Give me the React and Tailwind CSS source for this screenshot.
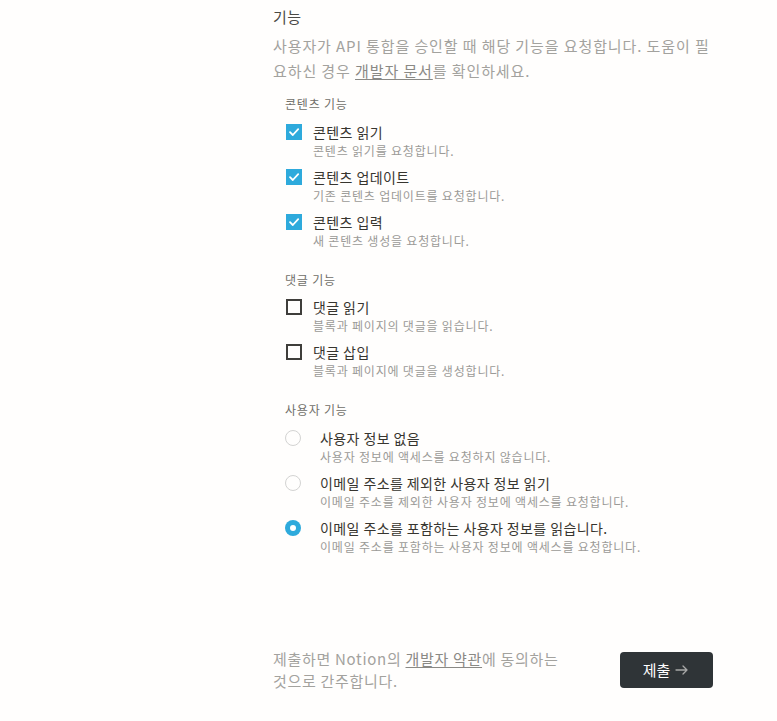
import React from 'react';

const font = { fontFamily: '"Noto Sans CJK KR", "Noto Sans", sans-serif' };

const contentItems = [
  { title: '콘텐츠 읽기', desc: '콘텐츠 읽기를 요청합니다.', checked: true },
  { title: '콘텐츠 업데이트', desc: '기존 콘텐츠 업데이트를 요청합니다.', checked: true },
  { title: '콘텐츠 입력', desc: '새 콘텐츠 생성을 요청합니다.', checked: true },
];

const commentItems = [
  { title: '댓글 읽기', desc: '블록과 페이지의 댓글을 읽습니다.', checked: false },
  { title: '댓글 삽입', desc: '블록과 페이지에 댓글을 생성합니다.', checked: false },
];

const userItems = [
  { title: '사용자 정보 없음', desc: '사용자 정보에 액세스를 요청하지 않습니다.', selected: false },
  { title: '이메일 주소를 제외한 사용자 정보 읽기', desc: '이메일 주소를 제외한 사용자 정보에 액세스를 요청합니다.', selected: false },
  { title: '이메일 주소를 포함하는 사용자 정보를 읽습니다.', desc: '이메일 주소를 포함하는 사용자 정보에 액세스를 요청합니다.', selected: true },
];

const Checkbox = ({ checked }) =>
  checked ? (
    <div className="w-4 h-4 bg-[#2eaadc] flex items-center justify-center shrink-0">
      <svg width="12" height="12" viewBox="0 0 12 12" fill="none">
        <path d="M2 6.2 L4.8 9 L10.2 3.2" stroke="white" strokeWidth="1.8" strokeLinecap="round" strokeLinejoin="round" />
      </svg>
    </div>
  ) : (
    <div className="w-4 h-4 border-2 border-[#3f3e3b] shrink-0" />
  );

const Radio = ({ selected }) =>
  selected ? (
    <div className="w-4 h-4 rounded-full bg-[#2eaadc] flex items-center justify-center shrink-0">
      <div className="w-[6px] h-[6px] rounded-full bg-white" />
    </div>
  ) : (
    <div className="w-4 h-4 rounded-full border-[1.5px] border-[#d3d3d2] shrink-0" />
  );

const Option = ({ title, desc, control, gap }) => (
  <div className="flex">
    <div className={`flex items-center h-5 ${gap}`}>{control}</div>
    <div>
      <div className="text-[14px] leading-5 tracking-[0.4px] text-[#37352f]">{title}</div>
      <div className="text-[12px] leading-[18px] tracking-[0.8px] text-[#9b9a97]">{desc}</div>
    </div>
  </div>
);

const Label = ({ children, className }) => (
  <div className={`text-[12px] leading-4 tracking-[0.8px] text-[#6f6e69] ${className}`}>{children}</div>
);

export default function App() {
  return (
    <div className="min-h-screen bg-[#fffefd]" style={font}>
      <div className="ml-[273px] w-[440px] pt-[6px]">
        <div className="text-[15px] leading-[22px] tracking-[0.5px] text-[#4a4945]">기능</div>
        <p className="mt-[5px] text-[15px] leading-[25px] tracking-[0.9px] text-[#a3a29e]">
          사용자가 API 통합을 승인할 때 해당 기능을 요청합니다. 도움이 필요하신 경우{' '}
          <span className="underline underline-offset-2 text-[#8a8985]">개발자 문서</span>를 확인하세요.
        </p>

        <div className="pl-3">
          <Label className="mt-[13px]">콘텐츠 기능</Label>
          <div className="mt-[10px] flex flex-col gap-[7px]">
            {contentItems.map((it) => (
              <Option key={it.title} title={it.title} desc={it.desc} gap="ml-px mr-[11px]" control={<Checkbox checked={it.checked} />} />
            ))}
          </div>

          <Label className="mt-[22px]">댓글 기능</Label>
          <div className="mt-[9px] flex flex-col gap-[7px]">
            {commentItems.map((it) => (
              <Option key={it.title} title={it.title} desc={it.desc} gap="ml-px mr-[11px]" control={<Checkbox checked={it.checked} />} />
            ))}
          </div>

          <Label className="mt-[22px]">사용자 기능</Label>
          <div className="mt-[10px] flex flex-col gap-[7px]">
            {userItems.map((it) => (
              <Option key={it.title} title={it.title} desc={it.desc} gap="mr-[19px]" control={<Radio selected={it.selected} />} />
            ))}
          </div>
        </div>

        <div className="mt-[92px] flex items-center justify-between">
          <p className="w-[292px] text-[15px] leading-[22px] tracking-[0.7px] text-[#a3a29e]">
            제출하면 Notion의{' '}
            <span className="underline underline-offset-2 text-[#8a8985]">개발자 약관</span>에 동의하는 것으로 간주합니다.
          </p>
          <button className="w-[93px] h-9 rounded bg-[#2f3437] flex items-center justify-center gap-1 text-[15px] text-white">
            <span>제출</span>
            <svg width="16" height="16" viewBox="0 0 16 16" fill="none">
              <path d="M2 8 H13 M9 4 L13 8 L9 12" stroke="#a8a8a8" strokeWidth="1.3" strokeLinecap="round" strokeLinejoin="round" />
            </svg>
          </button>
        </div>
      </div>
    </div>
  );
}
